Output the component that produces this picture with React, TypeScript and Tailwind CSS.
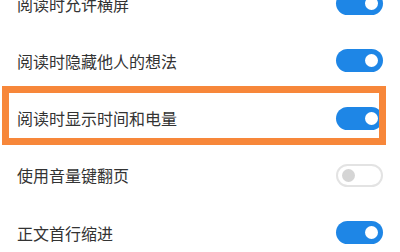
import React from 'react'

type Item = { label: string; on: boolean }

const items: Item[] = [
  { label: '阅读时允许横屏', on: true },
  { label: '阅读时隐藏他人的想法', on: true },
  { label: '阅读时显示时间和电量', on: true },
  { label: '使用音量键翻页', on: false },
  { label: '正文首行缩进', on: true },
]

function Toggle({ on }: { on: boolean }) {
  if (on) {
    return (
      <div className="flex h-[23px] w-[47px] items-center justify-end rounded-full bg-[#1e86e6] pr-[5px]">
        <div className="h-[13px] w-[13px] rounded-full bg-white" />
      </div>
    )
  }
  return (
    <div className="flex h-[23px] w-[47px] items-center justify-start rounded-full border-2 border-[#e3e3e3] bg-white pl-[4px]">
      <div className="h-[13px] w-[13px] rounded-full bg-[#d5d5d5]" />
    </div>
  )
}

export default function App() {
  return (
    <div
      className="relative h-[252px] w-[400px] overflow-hidden bg-white"
      style={{ fontFamily: '"Noto Sans CJK SC", "Noto Sans", sans-serif' }}
    >
      <div className="-mt-[25px] flex flex-col">
        {items.map((it) => (
          <div key={it.label} className="flex h-[57.25px] items-center justify-between pl-[17px] pr-[17px]">
            <span className="text-[16px] leading-none text-[#333333]">{it.label}</span>
            <Toggle on={it.on} />
          </div>
        ))}
      </div>

      {/* highlight box */}
      <div className="pointer-events-none absolute left-[2px] top-[86px] h-[59px] w-[384px] border-[7px] border-[#f7873a]" />
    </div>
  )
}
